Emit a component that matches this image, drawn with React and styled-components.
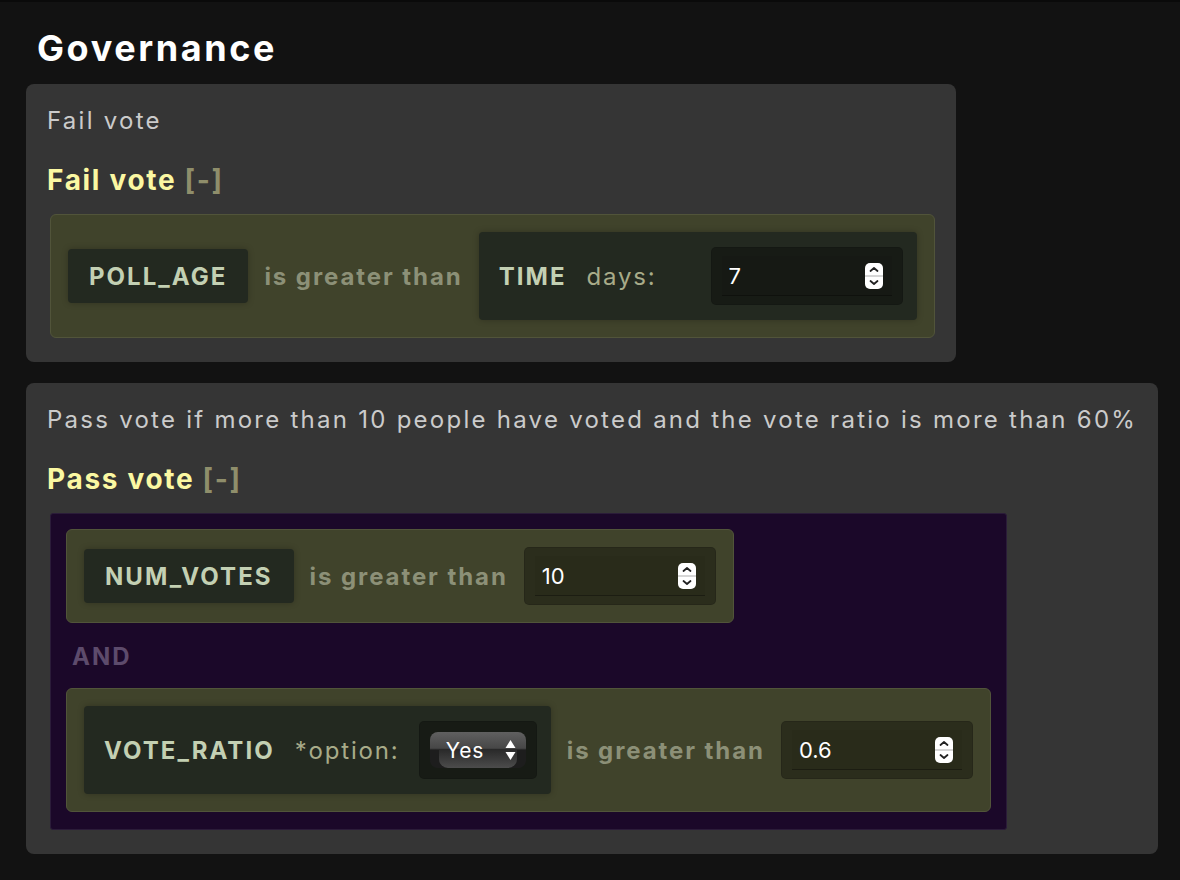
import styled, { createGlobalStyle } from 'styled-components'

const GlobalStyle = createGlobalStyle`
    html, body {
        margin: 0;
        padding: 0;
        background: #121212;
    }
    body {
        border-top: 2px solid #0a0a0a;
        font-family: Inter, "Liberation Sans", sans-serif;
    }
`;

const Page = styled.main`
    display: flex;
    flex-direction: column;
    align-items: flex-start;
    gap: 21px;
    padding: 0 0 30px 26px;
    min-height: 860px;
    box-sizing: border-box;
`;

const Heading = styled.h1`
    margin: 24px 0 -7px 11px;
    font-size: 36px;
    line-height: 44px;
    font-weight: 700;
    letter-spacing: 0.072em;
    color: #fff;
`;

const Card = styled.section`
    background: #353535;
    border-radius: 8px;
    padding: 21px 21px 24px 21px;
    display: flex;
    flex-direction: column;
    align-items: flex-start;
`;

const Description = styled.p`
    margin: 0;
    font-size: 24px;
    line-height: 32px;
    letter-spacing: 0.094em;
    color: #cbcbcb;
`;

const RuleTitle = styled.h3`
    margin: 27px 0 18px;
    font-size: 28px;
    line-height: 32px;
    font-weight: 700;
    letter-spacing: 0.06em;
    color: #fbf8a2;

    span {
        color: #8f8e6b;
    }
`;

const Condition = styled.div`
    display: inline-flex;
    align-items: center;
    gap: 16px;
    padding: 17px;
    margin-left: ${(p) => (p.$nested ? 0 : 3)}px;
    background: #40432b;
    border: 1px solid #51543a;
    border-radius: 6px;
`;

const LogicGroup = styled.div`
    display: inline-flex;
    flex-direction: column;
    align-items: flex-start;
    padding: 15px 15px 17px;
    margin-left: 3px;
    background: #1b0829;
    border: 1px solid #2b1c39;
    border-radius: 3px;
`;

const Joiner = styled.div`
    margin: 20px 0 17px 6px;
    font-size: 24px;
    line-height: 28px;
    font-weight: 700;
    letter-spacing: 0.083em;
    color: #5d4b6c;
`;

const Chip = styled.div`
    padding: 0 21px;
    height: 54px;
    display: flex;
    align-items: center;
    background: #232920;
    border-radius: 4px;
    box-shadow: 0 0 6px rgba(0, 0, 0, 0.25);
    font-size: 24px;
    font-weight: 700;
    letter-spacing: 0.085em;
    color: #c3d0b3;
`;

const Operator = styled.span`
    font-size: 24px;
    font-weight: 700;
    letter-spacing: 0.08em;
    color: #8c9077;
`;

const ParamBlock = styled.div`
    display: flex;
    align-items: center;
    padding: 15px 14px 15px 20px;
    background: #232920;
    border-radius: 4px;
    box-shadow: 0 0 6px rgba(0, 0, 0, 0.25);
`;

const ParamName = styled.span`
    font-size: 24px;
    font-weight: 700;
    letter-spacing: 0.085em;
    color: #c3d0b3;
    margin-right: 20px;
`;

const ParamLabel = styled.span`
    min-width: 112px;
    margin-right: 12px;
    font-size: 24px;
    letter-spacing: 0.075em;
    color: #a8ab89;
`;

const Well = styled.div`
    display: flex;
    align-items: center;
    padding: 9px 10px;
    height: 58px;
    box-sizing: border-box;
    background: rgba(0, 0, 0, 0.33);
    border: 1px solid rgba(0, 0, 0, 0.12);
    border-radius: 5px;
`;

const NumberBox = styled.div`
    position: relative;
    width: 170px;
    height: 40px;
    border-bottom: 1px solid rgba(0, 0, 0, 0.35);
    box-sizing: border-box;

    input {
        width: 100%;
        height: 100%;
        box-sizing: border-box;
        border: none;
        outline: none;
        background: rgba(0, 0, 0, 0.04);
        color: #fff;
        font-family: Inter, "Liberation Sans", sans-serif;
        font-size: 22px;
        padding: 0 32px 0 7px;
        -moz-appearance: textfield;
    }
    input::-webkit-inner-spin-button,
    input::-webkit-outer-spin-button {
        -webkit-appearance: none;
        margin: 0;
    }

    svg {
        position: absolute;
        right: 9px;
        top: 50%;
        transform: translateY(-50%);
    }
`;

const SelectBox = styled.div`
    position: relative;
    width: 96px;
    height: 36px;
    box-sizing: border-box;
    border-radius: 8px;
    background: linear-gradient(to bottom, #606060 0%, #474747 45%, #1d1d1d 50%, #1d1d1d 100%);
    display: flex;
    align-items: center;
    padding: 0 10px 0 16px;
    color: #fff;
    font-size: 21px;
    letter-spacing: 0.04em;
    overflow: hidden;

    &::before {
        content: '';
        position: absolute;
        left: 9px;
        right: 9px;
        top: 18px;
        bottom: 0;
        border-radius: 0 0 9px 9px;
        background: linear-gradient(to bottom, #2a2a2a, #4c4c4c);
    }

    span {
        position: relative;
        flex: 1;
    }

    svg {
        position: relative;
    }
`;

function Spinner() {
    return (
        <svg width="18" height="26" viewBox="0 0 18 26">
            <rect x="0" y="0" width="18" height="26" rx="5" fill="#fff" />
            <line x1="0" y1="13" x2="18" y2="13" stroke="#c8c8c8" strokeWidth="1.5" />
            <path d="M5.5 8 L9 5 L12.5 8" fill="none" stroke="#222" strokeWidth="1.8" strokeLinecap="round" strokeLinejoin="round" />
            <path d="M5.5 18 L9 21 L12.5 18" fill="none" stroke="#222" strokeWidth="1.8" strokeLinecap="round" strokeLinejoin="round" />
        </svg>
    );
}

function NumberInput({ value }) {
    return (
        <Well>
            <NumberBox>
                <input type="number" defaultValue={value} />
                <Spinner />
            </NumberBox>
        </Well>
    );
}

function Select({ value }) {
    return (
        <Well>
            <SelectBox>
                <span>{value}</span>
                <svg width="11" height="22" viewBox="0 0 11 22">
                    <path d="M5.5 1 L10.5 9 L0.5 9 Z" fill="#fff" />
                    <path d="M5.5 21 L10.5 13 L0.5 13 Z" fill="#fff" />
                </svg>
            </SelectBox>
        </Well>
    );
}

export default function App() {
    return (
        <Page>
            <GlobalStyle />
            <Heading>Governance</Heading>

            <Card>
                <Description>Fail vote</Description>
                <RuleTitle>
                    Fail vote <span>[-]</span>
                </RuleTitle>
                <Condition>
                    <Chip>POLL_AGE</Chip>
                    <Operator>is greater than</Operator>
                    <ParamBlock>
                        <ParamName>TIME</ParamName>
                        <ParamLabel>days:</ParamLabel>
                        <NumberInput value={7} />
                    </ParamBlock>
                </Condition>
            </Card>

            <Card>
                <Description>
                    Pass vote if more than 10 people have voted and the vote ratio is more than 60%
                </Description>
                <RuleTitle>
                    Pass vote <span>[-]</span>
                </RuleTitle>
                <LogicGroup>
                    <Condition $nested>
                        <Chip>NUM_VOTES</Chip>
                        <Operator>is greater than</Operator>
                        <NumberInput value={10} />
                    </Condition>
                    <Joiner>AND</Joiner>
                    <Condition $nested>
                        <ParamBlock>
                            <ParamName>VOTE_RATIO</ParamName>
                            <ParamLabel>*option:</ParamLabel>
                            <Select value="Yes" />
                        </ParamBlock>
                        <Operator>is greater than</Operator>
                        <NumberInput value={0.6} />
                    </Condition>
                </LogicGroup>
            </Card>
        </Page>
    );
}
